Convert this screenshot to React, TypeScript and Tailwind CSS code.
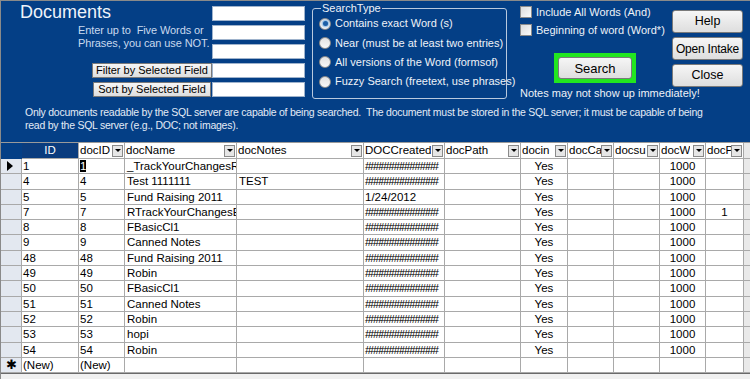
import React from 'react';

const BLUE = 'bg-[#043f86]';

const COLS = ['ID', 'docID', 'docName', 'docNotes', 'DOCCreated', 'docPath', 'docin', 'docCa', 'docsu', 'docW', 'docP'];

type Row = { id: string; name: string; notes?: string; created: string; p?: string };

const ROWS: Row[] = [
  { id: '1', name: '_TrackYourChangesRe', created: '##############' },
  { id: '4', name: 'Test 1111111', notes: 'TEST', created: '##############' },
  { id: '5', name: 'Fund Raising 2011', created: '1/24/2012' },
  { id: '7', name: 'RTrackYourChangesEx', created: '##############', p: '1' },
  { id: '8', name: 'FBasicCl1', created: '##############' },
  { id: '9', name: 'Canned Notes', created: '##############' },
  { id: '48', name: 'Fund Raising 2011', created: '##############' },
  { id: '49', name: 'Robin', created: '##############' },
  { id: '50', name: 'FBasicCl1', created: '##############' },
  { id: '51', name: 'Canned Notes', created: '##############' },
  { id: '52', name: 'Robin', created: '##############' },
  { id: '53', name: 'hopi', created: '##############' },
  { id: '54', name: 'Robin', created: '##############' },
];

const GRID = 'grid grid-cols-[21px_57px_46px_112px_127px_81px_76px_47px_46px_46px_46px_38px_1fr]';

function WinButton({ label, className }: { label: string; className: string }) {
  return (
    <button
      type="button"
      className={`flex shrink-0 items-center justify-center whitespace-nowrap border border-[#7a7a7a] bg-gradient-to-b from-[#f6f6f6] to-[#dedede] leading-none text-black ${className}`}>
      {label}
    </button>
  );
}

function Radio({ on, label }: { on?: boolean; label: string }) {
  return (
    <div className="flex h-[19.3px] items-center gap-[4px]">
      <span className="flex h-[12px] w-[12px] shrink-0 items-center justify-center rounded-full border border-[#8c8c8c] bg-gradient-to-b from-[#e2e2e2] to-[#f8f8f8]">
        {on && <span className="h-[5px] w-[5px] rounded-full bg-[#1d5fa6] shadow-[0_0_2px_1px_#7fb6e8]" />}
      </span>
      <span className="whitespace-nowrap">{label}</span>
    </div>
  );
}

function Check({ label }: { label: string }) {
  return (
    <div className="flex items-start gap-[4px]">
      <span className="mt-[3px] h-[12px] w-[12px] shrink-0 border border-[#8c8c8c] bg-gradient-to-br from-[#dcdcdc] to-[#fbfbfb]" />
      <span className="whitespace-nowrap">{label}</span>
    </div>
  );
}

function Drop() {
  return (
    <span className="ml-auto mr-[1px] flex h-[12px] w-[11px] shrink-0 items-center justify-center border border-[#8a8a8a] bg-[#e6e6e6]">
      <span className="h-0 w-0 border-x-[3px] border-t-[3px] border-x-transparent border-t-black" />
    </span>
  );
}

export default function App() {
  const cell = 'h-[15.3px] border-b border-r border-[#a9a9a9] overflow-hidden whitespace-nowrap leading-[14px] px-[1px]';
  return (
    <div
      className={`h-[379px] w-[750px] overflow-hidden ${BLUE} border-l border-t border-[#8a8a8a]`}
      style={{ fontFamily: '"Liberation Sans", Arial, sans-serif' }}>
      {/* Form header */}
      <div className="flex h-[141px] flex-col">
        <div className="flex h-[101px]">
          {/* Title + buttons */}
          <div className="flex w-[211px] shrink-0 flex-col">
            <div className="ml-[19px] text-[18px] leading-[22px] text-[#eef3fa]">Documents</div>
            <div className="ml-[77px] mt-[1px] whitespace-nowrap text-[11px] leading-[13px] tracking-[-0.1px] text-[#c9d9ee]">
              Enter up to&nbsp; Five Words or
              <br />
              Phrases, you can use NOT.
            </div>
            <div className="mt-[13px] flex flex-col items-end gap-[4px]">
              <WinButton label="Filter by Selected Field" className="h-[15px] w-[120px] text-[11px]" />
              <WinButton label="Sort by Selected Field" className="mr-[1px] h-[15px] w-[118px] text-[11px]" />
            </div>
          </div>
          {/* Text boxes */}
          <div className="flex w-[94px] shrink-0 flex-col gap-[4px] pt-[5px]">
            {[0, 1, 2, 3, 4].map(i => (
              <div key={i} className="h-[15px] w-[93px] border border-[#9fb3cc] bg-white" />
            ))}
          </div>
          {/* SearchType group */}
          <fieldset className="ml-[6px] mt-[1px] h-[97px] w-[195px] min-w-0 shrink-0 rounded-[3px] border border-[#b9c9de] px-[6px] text-[11px] text-[#eef2f8]">
            <legend className="ml-[2px] px-[1px] leading-[12px]">SearchType</legend>
            <div className="flex flex-col">
              <Radio on label="Contains exact Word (s)" />
              <Radio label="Near (must be at least two entries)" />
              <Radio label="All versions of the Word (formsof)" />
              <Radio label="Fuzzy Search (freetext, use phrases)" />
            </div>
          </fieldset>
          {/* Checkboxes + search */}
          <div className="ml-[13px] flex w-[152px] shrink-0 flex-col pt-[2px] text-[11px] leading-[18px] text-[#eef2f8]">
            <Check label="Include All Words (And)" />
            <Check label="Beginning of word (Word*)" />
            <div className="ml-[34px] mt-[14px] w-[82px] bg-[#22e61f] p-[4px]">
              <WinButton label="Search" className="h-[22px] w-full rounded-[3px] text-[13px]" />
            </div>
            <div className="mt-[3px] whitespace-nowrap leading-[14px]">Notes may not show up immediately!</div>
          </div>
          {/* Right buttons */}
          <div className="flex shrink-0 flex-col gap-[4px] pt-[9px]">
            <WinButton label="Help" className="h-[23px] w-[71px] rounded-[3px] text-[12.5px]" />
            <WinButton label="Open Intake" className="h-[23px] w-[71px] rounded-[3px] text-[12px] tracking-[-0.2px]" />
            <WinButton label="Close" className="h-[23px] w-[71px] rounded-[3px] text-[12.5px]" />
          </div>
        </div>
        <p className="ml-[24px] mt-[4px] whitespace-nowrap text-[10.5px] leading-[13px] tracking-[-0.25px] text-[#e3ebf6]">
          Only documents readable by the SQL server are capable of being searched.&nbsp; The document must be stored in the SQL server; it must be capable of being
          <br />
          read by the SQL server (e.g., DOC; not images).
        </p>
      </div>

      {/* Datasheet */}
      <div className="flex h-[237px] flex-col border-t border-[#9a9a9a] bg-[#f0f0f0] text-[11.5px] text-black">
        <div className={`${GRID} ${BLUE}`}>
          <div className={`h-[16px] ${BLUE}`} />
          {COLS.map((c, i) =>
            i === 0 ? (
              <div key={c} className="flex h-[16px] items-center justify-center border-r border-b border-[#a9a9a9] bg-[#0a3c7e] text-white">
                {c}
              </div>
            ) : (
              <div key={c} className="flex h-[16px] min-w-0 items-center overflow-hidden border-b border-r border-[#a9a9a9] bg-white pl-[1px]">
                <span className="min-w-0 overflow-hidden whitespace-nowrap">{c}</span>
                <Drop />
              </div>
            ),
          )}
          <div className="h-[16px] border-b border-[#a9a9a9] bg-[#e9e9e9]" />
        </div>
        {ROWS.map((r, ri) => (
          <div key={r.id} className={`${GRID} bg-white`}>
            <div className={`${cell} flex items-center bg-[#e3e8f0] pl-[6px]`}>
              {ri === 0 && <span className="h-0 w-0 border-y-[5px] border-l-[6px] border-y-transparent border-l-black" />}
            </div>
            <div className={cell}>{r.id}</div>
            <div className={cell}>
              {ri === 0 ? <span className="bg-black text-white">{r.id}</span> : r.id}
            </div>
            <div className={`${cell} pl-[2px]`}>{r.name}</div>
            <div className={`${cell} pl-[2px]`}>{r.notes ?? ''}</div>
            <div className={`${cell} tracking-[-1.2px]`}>
              {r.created === '1/24/2012' ? <span className="tracking-normal">{r.created}</span> : r.created}
            </div>
            <div className={cell} />
            <div className={`${cell} text-center`}>Yes</div>
            <div className={cell} />
            <div className={cell} />
            <div className={`${cell} text-center`}>1000</div>
            <div className={`${cell} text-center`}>{r.p ?? ''}</div>
            <div className={`${cell} border-r-0 bg-[#e9e9e9]`} />
          </div>
        ))}
        <div className={`${GRID} bg-white`}>
          <div className={`${cell} flex items-center justify-center bg-[#e3e8f0] text-[13px]`}>✱</div>
          <div className={cell}>(New)</div>
          <div className={cell}>(New)</div>
          {[0, 1, 2, 3, 4, 5, 6, 7, 8].map(i => (
            <div key={i} className={cell} />
          ))}
          <div className={`${cell} border-r-0 bg-[#e9e9e9]`} />
        </div>
        <div className="flex-1 border-t border-[#6a6a6a] bg-[#f0f0f0]" />
      </div>
    </div>
  );
}
